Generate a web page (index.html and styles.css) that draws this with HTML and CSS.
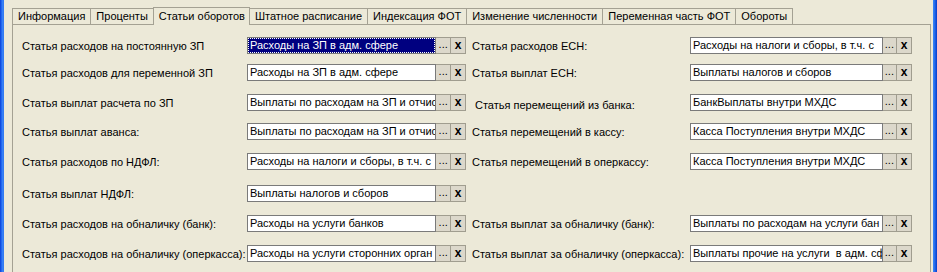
FILE: index.html
```html
<!DOCTYPE html>
<html lang="ru">
<head>
    <meta charset="UTF-8">
    <title>Статьи оборотов</title>
    <link rel="stylesheet" href="styles.css">
</head>
<body>

<div class="window">
    <div class="frame frame-left"></div>

    <div class="content">
        <div class="tabs">
            <div class="tab">Информация</div>
            <div class="tab">Проценты</div>
            <div class="tab active">Статьи оборотов</div>
            <div class="tab">Штатное расписание</div>
            <div class="tab">Индексация ФОТ</div>
            <div class="tab">Изменение численности</div>
            <div class="tab">Переменная часть ФОТ</div>
            <div class="tab last">Обороты</div>
        </div>

        <div class="panel">
            <div class="form">
                <!-- строка 1 -->
                <div class="label">Статья расходов на постоянную ЗП</div>
                <div class="field">
                    <div class="input selected"><span class="sel">Расходы на ЗП в адм. сфере</span></div>
                    <div class="btn">...</div>
                    <div class="btn clear">x</div>
                </div>
                <div class="label right">Статья расходов ЕСН:</div>
                <div class="field wide">
                    <div class="input">Расходы на налоги и сборы, в т.ч. с</div>
                    <div class="btn">...</div>
                    <div class="btn clear">x</div>
                </div>

                <!-- строка 2 -->
                <div class="label">Статья расходов для переменной ЗП</div>
                <div class="field">
                    <div class="input">Расходы на ЗП в адм. сфере</div>
                    <div class="btn">...</div>
                    <div class="btn clear">x</div>
                </div>
                <div class="label right">Статья выплат ЕСН:</div>
                <div class="field wide">
                    <div class="input">Выплаты налогов и сборов</div>
                    <div class="btn">...</div>
                    <div class="btn clear">x</div>
                </div>

                <!-- строка 3 -->
                <div class="label">Статья выплат расчета по ЗП</div>
                <div class="field">
                    <div class="input">Выплаты по расходам на ЗП и отчис</div>
                    <div class="btn">...</div>
                    <div class="btn clear">x</div>
                </div>
                <div class="label right shift">Статья перемещений из банка:</div>
                <div class="field wide">
                    <div class="input">БанкВыплаты внутри МХДС</div>
                    <div class="btn">...</div>
                    <div class="btn clear">x</div>
                </div>

                <!-- строка 4 -->
                <div class="label">Статья выплат аванса:</div>
                <div class="field">
                    <div class="input">Выплаты по расходам на ЗП и отчис</div>
                    <div class="btn">...</div>
                    <div class="btn clear">x</div>
                </div>
                <div class="label right">Статья перемещений в кассу:</div>
                <div class="field wide">
                    <div class="input">Касса Поступления внутри МХДС</div>
                    <div class="btn">...</div>
                    <div class="btn clear">x</div>
                </div>

                <!-- строка 5 -->
                <div class="label">Статья расходов по НДФЛ:</div>
                <div class="field">
                    <div class="input">Расходы на налоги и сборы, в т.ч. с</div>
                    <div class="btn">...</div>
                    <div class="btn clear">x</div>
                </div>
                <div class="label right">Статья перемещений в оперкассу:</div>
                <div class="field wide">
                    <div class="input">Касса Поступления внутри МХДС</div>
                    <div class="btn">...</div>
                    <div class="btn clear">x</div>
                </div>

                <!-- строка 6 -->
                <div class="label">Статья выплат НДФЛ:</div>
                <div class="field">
                    <div class="input">Выплаты налогов и сборов</div>
                    <div class="btn">...</div>
                    <div class="btn clear">x</div>
                </div>
                <div class="label right"></div>
                <div></div>

                <!-- строка 7 -->
                <div class="label">Статья расходов на обналичку (банк):</div>
                <div class="field">
                    <div class="input">Расходы на услуги банков</div>
                    <div class="btn">...</div>
                    <div class="btn clear">x</div>
                </div>
                <div class="label right">Статья выплат за обналичку (банк):</div>
                <div class="field wide">
                    <div class="input">Выплаты по расходам на услуги бан</div>
                    <div class="btn">...</div>
                    <div class="btn clear">x</div>
                </div>

                <!-- строка 8 -->
                <div class="label">Статья расходов на обналичку (оперкасса):</div>
                <div class="field">
                    <div class="input">Расходы на услуги сторонних орган</div>
                    <div class="btn">...</div>
                    <div class="btn clear">x</div>
                </div>
                <div class="label right">Статья выплат за обналичку (оперкасса):</div>
                <div class="field wide">
                    <div class="input">Выплаты прочие на услуги  в адм. сф</div>
                    <div class="btn">...</div>
                    <div class="btn clear">x</div>
                </div>
            </div>
        </div>
    </div>

    <div class="frame frame-right"></div>
</div>

</body>
</html>
```

FILE: styles.css
```css
html, body {
    margin: 0;
    padding: 0;
}
body {
    width: 937px;
    height: 272px;
    overflow: hidden;
    background-color: #ece9d8;
    font-family: "Liberation Sans", Arial, sans-serif;
    font-size: 11px;
    color: #000;
}
.window {
    display: flex;
    height: 272px;
}
.frame {
    width: 4px;
    flex: none;
}
.frame-left {
    background: linear-gradient(to right, #0a3ed6, #1f64ee, #3b83f7, #2f76ef);
}
.frame-right {
    background: linear-gradient(to right, #3b87f8, #2a72ee, #1657e0, #0a3cc9);
}
.content {
    flex: 1;
    padding: 8px 2px 0 8px;
    display: flex;
    flex-direction: column;
}

/* вкладки */
.tabs {
    display: flex;
    align-items: flex-end;
    height: 16px;
    position: relative;
    z-index: 1;
}
.tab {
    height: 15px;
    line-height: 15px;
    padding: 0 5px;
    border-top: 1px solid #a4a193;
    border-left: 1px solid #a4a193;
    white-space: nowrap;
}
.tab.last {
    border-right: 1px solid #a4a193;
}
.tab.active {
    height: 17px;
    line-height: 17px;
    margin-bottom: -1px;
    border-right: 1px solid #a4a193;
    background-color: #ece9d8;
    padding-right: 4px;
}
.tab.active + .tab {
    border-left: none;
}

/* панель */
.panel {
    flex: 1;
    border: 1px solid #a4a193;
    border-bottom: none;
    padding: 12px 0 0 9px;
}
.form {
    display: grid;
    grid-template-columns: 225px 219px 224px 222px;
    grid-template-rows: 27px 30px 29px 30px 32px 30px 30px 17px;
    align-items: start;
}
.label {
    height: 17px;
    display: flex;
    align-items: center;
    white-space: nowrap;
}
.label.right {
    padding-left: 6px;
}
.label.shift {
    padding-left: 9px;
    padding-top: 2px;
}

/* поле выбора */
.field {
    display: flex;
    height: 17px;
}
.input {
    width: 185px;
    height: 15px;
    line-height: 15px;
    padding: 0 2px;
    border: 1px solid #7a7a7a;
    background-color: #fff;
    white-space: pre;
    overflow: hidden;
}
.field.wide .input {
    width: 190px;
}
.input.selected {
    background-color: #000080;
    color: #fff;
    padding: 0;
    width: 189px;
}
.sel {
    display: block;
    height: 13px;
    line-height: 13px;
    padding: 0 1px;
    border: 1px dotted #fff;
}
.btn {
    width: 14px;
    height: 15px;
    line-height: 13px;
    text-align: center;
    border: 1px solid #a09d8f;
    border-left: none;
    background-color: #dcd8cb;
}
.btn.clear {
    font-weight: bold;
    line-height: 15px;
    font-size: 12px;
}
```
